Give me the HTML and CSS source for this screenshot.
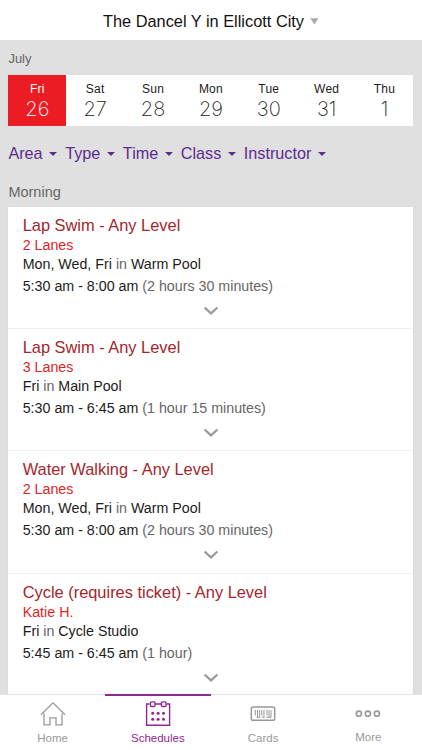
FILE: index.html
```html
<!DOCTYPE html>
<html lang="en">
<head>
<meta charset="utf-8">
<meta name="viewport" content="width=device-width, initial-scale=1">
<title>Schedules</title>
<link rel="stylesheet" href="styles.css">
</head>
<body>
<div class="app">
  <header class="header"><span>The Dancel Y in Ellicott City</span><svg class="location-arrow" width="9" height="7" viewBox="0 0 9 7"><path d="M0.3 .3h8.2L4.4 6.6z" fill="#aaa"/></svg></header>
  <main class="content">
    <div class="month">July</div>
    <div class="days">
      <div class="day selected"><span>Fri</span><b>26</b></div>
      <div class="day"><span>Sat</span><b>27</b></div>
      <div class="day"><span>Sun</span><b>28</b></div>
      <div class="day"><span>Mon</span><b>29</b></div>
      <div class="day"><span>Tue</span><b>30</b></div>
      <div class="day"><span>Wed</span><b>31</b></div>
      <div class="day"><span>Thu</span><b>1</b></div>
    </div>
    <nav class="filters">
      <span class="filter">Area<i class="caret"></i></span>
      <span class="filter">Type<i class="caret"></i></span>
      <span class="filter">Time<i class="caret"></i></span>
      <span class="filter">Class<i class="caret"></i></span>
      <span class="filter">Instructor<i class="caret"></i></span>
    </nav>
    <h2 class="section">Morning</h2>
    <div class="list">
      <article class="item">
        <h3>Lap Swim - Any Level</h3>
        <div class="who">2 Lanes</div>
        <div class="where">Mon, Wed, Fri <em>in</em> Warm Pool</div>
        <div class="when">5:30 am - 8:00 am <em>(2 hours 30 minutes)</em></div>
        <svg class="chevron" width="16" height="10" viewBox="0 0 16 10"><path d="M1.6 1.5 8 7.4l6.4-5.9"/></svg>
      </article>
      <article class="item">
        <h3>Lap Swim - Any Level</h3>
        <div class="who">3 Lanes</div>
        <div class="where">Fri <em>in</em> Main Pool</div>
        <div class="when">5:30 am - 6:45 am <em>(1 hour 15 minutes)</em></div>
        <svg class="chevron" width="16" height="10" viewBox="0 0 16 10"><path d="M1.6 1.5 8 7.4l6.4-5.9"/></svg>
      </article>
      <article class="item">
        <h3>Water Walking - Any Level</h3>
        <div class="who">2 Lanes</div>
        <div class="where">Mon, Wed, Fri <em>in</em> Warm Pool</div>
        <div class="when">5:30 am - 8:00 am <em>(2 hours 30 minutes)</em></div>
        <svg class="chevron" width="16" height="10" viewBox="0 0 16 10"><path d="M1.6 1.5 8 7.4l6.4-5.9"/></svg>
      </article>
      <article class="item">
        <h3>Cycle (requires ticket) - Any Level</h3>
        <div class="who">Katie H.</div>
        <div class="where">Fri <em>in</em> Cycle Studio</div>
        <div class="when">5:45 am - 6:45 am <em>(1 hour)</em></div>
        <svg class="chevron" width="16" height="10" viewBox="0 0 16 10"><path d="M1.6 1.5 8 7.4l6.4-5.9"/></svg>
      </article>
    </div>
  </main>
  <nav class="tabs">
    <div class="tab">
      <svg width="26" height="26" viewBox="0 0 26 26"><path d="M1 13.7 13 1.9l12 11.8M4 12.5v11.4h6v-7h6v7h6V12.5"/></svg>
      <span>Home</span>
    </div>
    <div class="tab active">
      <svg width="26" height="26" viewBox="0 0 26 26"><path d="M4.4 3H1.6v21.3h23V3h-2.8M10 3h6.6"/><rect x="5.4" y=".9" width="4.6" height="4.6" rx="1"/><rect x="16.4" y=".9" width="4.6" height="4.6" rx="1"/><g class="dots"><circle cx="7.7" cy="12.2" r="1.5"/><circle cx="13.1" cy="12.2" r="1.5"/><circle cx="18.5" cy="12.2" r="1.5"/><circle cx="7.7" cy="18.2" r="1.5"/><circle cx="13.1" cy="18.2" r="1.5"/><circle cx="18.5" cy="18.2" r="1.5"/></g></svg>
      <span>Schedules</span>
    </div>
    <div class="tab">
      <svg width="26" height="26" viewBox="0 0 26 26"><rect class="card" x="1.3" y="6" width="23.4" height="13.2" rx="1.8"/><path class="bars" d="M5.3 9v5.5M7.5 9v7.2M9.7 9v7.2M11.8 9v5.5M14 9v7.2M17 9v5.5M19 9v7.2M21 9v7.2M6.6 16.3h3.5M11.8 16.3h2.7M16.4 16.3h4.8"/></svg>
      <span>Cards</span>
    </div>
    <div class="tab more">
      <svg width="26" height="26" viewBox="0 0 26 26"><g class="rings"><circle cx="3.9" cy="12.7" r="2.6"/><circle cx="12.9" cy="12.7" r="2.6"/><circle cx="21.9" cy="12.7" r="2.6"/></g></svg>
      <span>More</span>
    </div>
  </nav>
</div>
</body>
</html>
```
FILE: styles.css
```css
* { box-sizing: border-box; }
body {
  margin: 0;
  font-family: "Liberation Sans", Arial, sans-serif;
  color: #1c1c1c;
}
.app {
  height: 750px;
  display: flex;
  flex-direction: column;
  overflow: hidden;
  background: #e0e0e0;
}
.header {
  flex: none;
  height: 40px;
  padding: 3px 0 0 0;
  display: flex;
  align-items: center;
  justify-content: center;
  gap: 6px;
  background: #fff;
  color: #111;
  font-size: 16.35px;
}
.content {
  flex: 1;
  min-height: 0;
  overflow: hidden;
  padding: 10px 8.6px 0 8.4px;
}
.month {
  height: 25px;
  line-height: 17px;
  font-size: 13px;
  color: #666;
}
.days {
  display: grid;
  grid-template-columns: repeat(7, 1fr);
  height: 50.5px;
  background: #fff;
}
.day {
  display: flex;
  flex-direction: column;
  align-items: center;
  padding-top: 6px;
}
.day span { font-size: 12px; line-height: 16px; letter-spacing: .2px; }
.day b {
  font-family: Inter, sans-serif;
  font-weight: 200;
  font-size: 20px;
  line-height: 25px;
}
.selected { background: #ec1c24; color: #fff; }
.filters {
  display: flex;
  height: 52.5px;
  padding-top: 17px;
  gap: 7.9px;
  color: #5c2d91;
  font-size: 16.2px;
  line-height: 20px;
}
.filter { display: flex; align-items: center; gap: 6.7px; height: 20px; }
.caret {
  margin-top: 2px;
  border: 4px solid transparent;
  border-top-color: #5c2d91;
  border-bottom: 0;
}
.section {
  margin: 0;
  height: 29px;
  padding-top: 4px;
  font-size: 14.5px;
  line-height: 20px;
  font-weight: 400;
  color: #666;
}
.list { background: #fff; box-shadow: 0 0 2px rgba(0, 0, 0, .06); }
.item {
  height: 122.2px;
  padding: 8px 15px 0 14.3px;
  border-bottom: 1px solid #f0f0f0;
  display: flex;
  flex-direction: column;
  font-size: 14.25px;
}
h3 {
  margin: 0;
  font-size: 16.4px;
  line-height: 20px;
  font-weight: 400;
  color: #a4262c;
}
.who { color: #e01f26; line-height: 20px; }
.where { line-height: 19px; }
.when { line-height: 24px; }
.item em { font-style: normal; color: #666; }
.chevron {
  align-self: center;
  margin-top: 8px;
  fill: none;
  stroke: #999;
  stroke-width: 2.2;
}
.tabs {
  flex: none;
  height: 56px;
  padding-right: 1px;
  display: grid;
  grid-template-columns: repeat(4, 1fr);
  background: #fff;
  border-top: 1px solid #e2e2e2;
}
.tab {
  display: flex;
  flex-direction: column;
  align-items: center;
  padding-top: 5px;
  border-top: 2px solid transparent;
  margin-top: -1px;
  color: #999;
  font-size: 11.5px;
}
.tab span { line-height: 16px; margin-top: 3px; }
.tab svg { fill: none; stroke: currentColor; stroke-width: 1.3; }
.tab.active { color: #92278f; border-top-color: #92278f; }
.tab.active svg { stroke-width: 1.4; }
.tab .dots { fill: currentColor; stroke: none; }
.tab .card { stroke-width: 1.5; }
.tab .bars { stroke-width: 1; }
.tab .rings { stroke-width: 1.6; }
.more span { margin-top: 2px; }
```
